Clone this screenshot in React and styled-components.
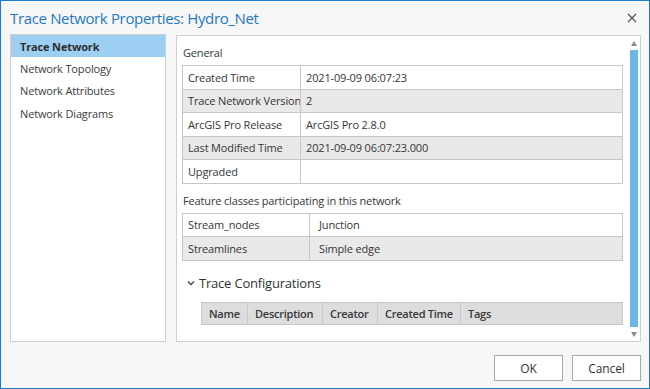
import React from 'react';
import styled, { createGlobalStyle } from 'styled-components';

const Global = createGlobalStyle`
  html, body { margin: 0; padding: 0; background: #ffffff; }
  body { font-family: "Open Sans", "Noto Sans", sans-serif; }
  #root { width: 650px; height: 389px; }
`;

const Window = styled.div`
  width: 650px;
  height: 389px;
  box-sizing: border-box;
  border: 1px solid #1b7ccf;
  background: #f7f7f7;
  display: flex;
  flex-direction: column;
  color: #363636;
  font-size: 11px;
  letter-spacing: -0.15px;
`;

const TitleBar = styled.div`
  height: 33px;
  flex: none;
  display: flex;
  align-items: center;
  justify-content: space-between;
  padding: 0 11px 0 9px;
`;

const Title = styled.div`
  font-size: 15px;
  color: #1f78c1;
  letter-spacing: -0.35px;
`;

const CloseButton = styled.button`
  border: 0;
  background: transparent;
  padding: 0;
  width: 12px;
  height: 12px;
  display: flex;
  align-items: center;
  justify-content: center;
  cursor: pointer;
`;

const Body = styled.div`
  flex: 1;
  display: flex;
  gap: 10px;
  padding: 0 8px 0 9px;
  min-height: 0;
`;

const Nav = styled.ul`
  list-style: none;
  margin: 0;
  padding: 0;
  width: 156px;
  box-sizing: border-box;
  background: #ffffff;
  border: 1px solid #d0d0d0;
  height: 308px;
`;

const NavItem = styled.li`
  height: 22.4px;
  display: flex;
  align-items: center;
  padding-left: 9px;
  font-weight: ${(p) => (p.$active ? 700 : 400)};
  background: ${(p) => (p.$active ? '#9dcff3' : 'transparent')};
  color: ${(p) => (p.$active ? '#2e2e2e' : '#3c3c3c')};
`;

const Panel = styled.div`
  flex: 1;
  margin-top: 1px;
  height: 307px;
  box-sizing: border-box;
  background: #ffffff;
  border: 1px solid #d0d0d0;
  display: flex;
`;

const Content = styled.div`
  flex: 1;
  padding: 8px 5px 0 5px;
  display: flex;
  flex-direction: column;
`;

const SectionLabel = styled.div`
  line-height: 18px;
  padding-left: 1px;
  margin-top: ${(p) => p.$mt || 0}px;
  margin-bottom: 3px;
`;

const Table = styled.div`
  display: grid;
  grid-template-columns: ${(p) => p.$cols};
  border-top: 1px solid #c8c8c8;
  border-left: 1px solid #c8c8c8;
`;

const Cell = styled.div`
  height: 22.5px;
  display: flex;
  align-items: center;
  padding-left: ${(p) => p.$pl || 5}px;
  border-right: 1px solid #c8c8c8;
  border-bottom: 1px solid #c8c8c8;
  background: ${(p) => (p.$shade ? '#e9e9e9' : '#ffffff')};
  white-space: nowrap;
  overflow: hidden;
`;

const Expander = styled.div`
  display: flex;
  align-items: center;
  gap: 4px;
  margin: 13px 0 0 5px;
  height: 18px;
  font-size: 13px;
  letter-spacing: -0.2px;
  color: #333;
`;

const ConfigTable = styled.div`
  margin: 10px 0 0 19px;
  display: grid;
  grid-template-columns: 46px 75px 55px 83px 1fr;
  border: 1px solid #c8c8c8;
  border-right: 0;
  background: #dddddd;
`;

const HeaderCell = styled.div`
  height: 21px;
  display: flex;
  align-items: center;
  padding-left: 7px;
  border-right: 1px solid #c8c8c8;
  font-weight: 600;
  letter-spacing: -0.25px;
  color: #383838;
  white-space: nowrap;
`;

const ScrollBar = styled.div`
  width: 11px;
  display: flex;
  flex-direction: column;
  align-items: center;
  padding: 3px 0 2px;
  box-sizing: border-box;
  margin-right: 1px;
`;

const Arrow = styled.div`
  width: 0;
  height: 0;
  border-left: 3.5px solid transparent;
  border-right: 3.5px solid transparent;
  ${(p) =>
    p.$up
      ? 'border-bottom: 5px solid #8a8a8a;'
      : 'border-top: 5px solid #8a8a8a;'}
  margin: 2px 0;
`;

const Track = styled.div`
  flex: 1;
  width: 8px;
  margin: 2px 0 3px;
  background: #dcdcdc;
  display: flex;
  flex-direction: column;
`;

const Thumb = styled.div`
  background: #6cb5e7;
  height: 277px;
`;

const Footer = styled.div`
  height: 46px;
  flex: none;
  display: flex;
  justify-content: flex-end;
  align-items: flex-start;
  gap: 9px;
  padding: 13px 8px 0 0;
  box-sizing: border-box;
`;

const Button = styled.button`
  width: 69px;
  height: 26px;
  box-sizing: border-box;
  border: 1px solid #a8a8a8;
  background: #ffffff;
  font-family: inherit;
  font-size: 12px;
  letter-spacing: -0.1px;
  color: #333;
  padding: 0;
`;

const generalRows = [
  ['Created Time', '2021-09-09 06:07:23'],
  ['Trace Network Version', '2'],
  ['ArcGIS Pro Release', 'ArcGIS Pro 2.8.0'],
  ['Last Modified Time', '2021-09-09 06:07:23.000'],
  ['Upgraded', ''],
];

const featureRows = [
  ['Stream_nodes', 'Junction'],
  ['Streamlines', 'Simple edge'],
];

const navItems = ['Trace Network', 'Network Topology', 'Network Attributes', 'Network Diagrams'];
const configCols = ['Name', 'Description', 'Creator', 'Created Time', 'Tags'];

export default function App() {
  return (
    <>
      <Global />
      <Window>
        <TitleBar>
          <Title>Trace Network Properties: Hydro_Net</Title>
          <CloseButton aria-label="Close">
            <svg width="10" height="10" viewBox="0 0 10 10">
              <path d="M1 1 L9 9 M9 1 L1 9" stroke="#555" strokeWidth="1.3" fill="none" />
            </svg>
          </CloseButton>
        </TitleBar>
        <Body>
          <Nav>
            {navItems.map((n, i) => (
              <NavItem key={n} $active={i === 0}>
                {n}
              </NavItem>
            ))}
          </Nav>
          <Panel>
            <Content>
              <SectionLabel>General</SectionLabel>
              <Table $cols="118px 1fr">
                {generalRows.map(([k, v], i) => (
                  <React.Fragment key={k}>
                    <Cell $shade={i % 2 === 1}>{k}</Cell>
                    <Cell $shade={i % 2 === 1}>{v}</Cell>
                  </React.Fragment>
                ))}
              </Table>
              <SectionLabel $mt={8}>Feature classes participating in this network</SectionLabel>
              <Table $cols="127px 1fr">
                {featureRows.map(([k, v], i) => (
                  <React.Fragment key={k}>
                    <Cell $shade={i % 2 === 1}>{k}</Cell>
                    <Cell $shade={i % 2 === 1} $pl={9}>{v}</Cell>
                  </React.Fragment>
                ))}
              </Table>
              <Expander>
                <svg width="8" height="6" viewBox="0 0 8 6">
                  <path d="M1 1.5 L4 4.5 L7 1.5" stroke="#444" strokeWidth="1.3" fill="none" />
                </svg>
                Trace Configurations
              </Expander>
              <ConfigTable>
                {configCols.map((c) => (
                  <HeaderCell key={c}>{c}</HeaderCell>
                ))}
              </ConfigTable>
            </Content>
            <ScrollBar>
              <Arrow $up />
              <Track>
                <Thumb />
              </Track>
              <Arrow />
            </ScrollBar>
          </Panel>
        </Body>
        <Footer>
          <Button>OK</Button>
          <Button>Cancel</Button>
        </Footer>
      </Window>
    </>
  );
}
